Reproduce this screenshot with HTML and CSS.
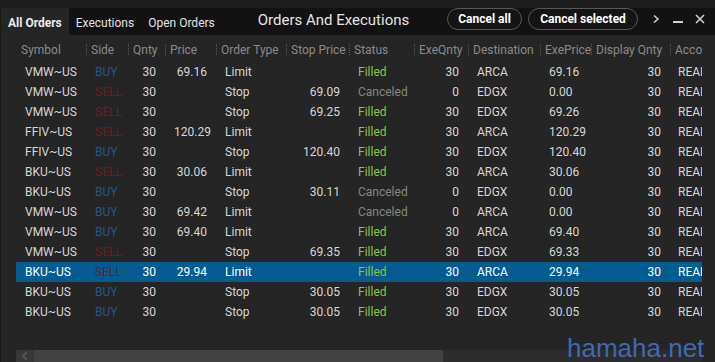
FILE: index.html
```html
<!DOCTYPE html>
<html lang="en">
  <head>
    <meta charset="UTF-8" />
    <title>Orders And Executions</title>
    <link rel="stylesheet" href="styles.css">
  </head>
  <body>
    <div class="window">
      <div class="topstrip"></div>
      <div class="titlebar">
        <div class="tabs">
          <div class="tab active">All Orders</div>
          <div class="tab">Executions</div>
          <div class="tab">Open Orders</div>
        </div>
        <div class="title">Orders And Executions</div>
        <div class="actions">
          <button class="pill pill-all">Cancel all</button>
          <button class="pill pill-sel">Cancel selected</button>
          <div class="winctl">
            <span class="icon">
              <svg width="8" height="10" viewBox="0 0 8 10"><path d="M2 1.5 L6 5 L2 8.5" fill="none" stroke="#d0d0d0" stroke-width="1.6"/></svg>
            </span>
            <span class="icon">
              <svg width="10" height="10" viewBox="0 0 10 10"><rect x="0" y="7" width="10" height="2" fill="#d0d0d0"/></svg>
            </span>
            <span class="icon">
              <svg width="10" height="10" viewBox="0 0 10 10"><path d="M1 1 L9 9 M9 1 L1 9" stroke="#d0d0d0" stroke-width="1.6"/></svg>
            </span>
          </div>
        </div>
      </div>

      <div class="grid-wrap">
        <table class="grid">
          <colgroup>
            <col class="c-symbol" /><col class="c-side" /><col class="c-qnty" /><col class="c-price" />
            <col class="c-type" /><col class="c-stop" /><col class="c-status" /><col class="c-exeq" />
            <col class="c-dest" /><col class="c-exep" /><col class="c-disp" /><col class="c-acct" />
          </colgroup>
          <thead>
            <tr>
              <th class="first">Symbol</th><th>Side</th><th>Qnty</th><th>Price</th>
              <th>Order Type</th><th>Stop Price</th><th>Status</th><th>ExeQnty</th>
              <th>Destination</th><th>ExePrice</th><th>Display Qnty</th><th>Account</th>
            </tr>
          </thead>
          <tbody>
            <tr><td>VMW~US</td><td class="buy">BUY</td><td class="num">30</td><td class="num">69.16</td><td>Limit</td><td class="num"></td><td class="filled">Filled</td><td class="num">30</td><td>ARCA</td><td>69.16</td><td class="num">30</td><td>REAL</td></tr>
            <tr><td>VMW~US</td><td class="sell">SELL</td><td class="num">30</td><td class="num"></td><td>Stop</td><td class="num">69.09</td><td class="canceled">Canceled</td><td class="num">0</td><td>EDGX</td><td>0.00</td><td class="num">30</td><td>REAL</td></tr>
            <tr><td>VMW~US</td><td class="sell">SELL</td><td class="num">30</td><td class="num"></td><td>Stop</td><td class="num">69.25</td><td class="filled">Filled</td><td class="num">30</td><td>EDGX</td><td>69.26</td><td class="num">30</td><td>REAL</td></tr>
            <tr><td>FFIV~US</td><td class="sell">SELL</td><td class="num">30</td><td class="num">120.29</td><td>Limit</td><td class="num"></td><td class="filled">Filled</td><td class="num">30</td><td>ARCA</td><td>120.29</td><td class="num">30</td><td>REAL</td></tr>
            <tr><td>FFIV~US</td><td class="buy">BUY</td><td class="num">30</td><td class="num"></td><td>Stop</td><td class="num">120.40</td><td class="filled">Filled</td><td class="num">30</td><td>EDGX</td><td>120.40</td><td class="num">30</td><td>REAL</td></tr>
            <tr><td>BKU~US</td><td class="sell">SELL</td><td class="num">30</td><td class="num">30.06</td><td>Limit</td><td class="num"></td><td class="filled">Filled</td><td class="num">30</td><td>ARCA</td><td>30.06</td><td class="num">30</td><td>REAL</td></tr>
            <tr><td>BKU~US</td><td class="buy">BUY</td><td class="num">30</td><td class="num"></td><td>Stop</td><td class="num">30.11</td><td class="canceled">Canceled</td><td class="num">0</td><td>EDGX</td><td>0.00</td><td class="num">30</td><td>REAL</td></tr>
            <tr><td>VMW~US</td><td class="buy">BUY</td><td class="num">30</td><td class="num">69.42</td><td>Limit</td><td class="num"></td><td class="canceled">Canceled</td><td class="num">0</td><td>ARCA</td><td>0.00</td><td class="num">30</td><td>REAL</td></tr>
            <tr><td>VMW~US</td><td class="buy">BUY</td><td class="num">30</td><td class="num">69.40</td><td>Limit</td><td class="num"></td><td class="filled">Filled</td><td class="num">30</td><td>ARCA</td><td>69.40</td><td class="num">30</td><td>REAL</td></tr>
            <tr><td>VMW~US</td><td class="sell">SELL</td><td class="num">30</td><td class="num"></td><td>Stop</td><td class="num">69.35</td><td class="filled">Filled</td><td class="num">30</td><td>EDGX</td><td>69.33</td><td class="num">30</td><td>REAL</td></tr>
            <tr class="selected"><td>BKU~US</td><td class="sell">SELL</td><td class="num">30</td><td class="num">29.94</td><td>Limit</td><td class="num"></td><td class="filled">Filled</td><td class="num">30</td><td>ARCA</td><td>29.94</td><td class="num">30</td><td>REAL</td></tr>
            <tr><td>BKU~US</td><td class="buy">BUY</td><td class="num">30</td><td class="num"></td><td>Stop</td><td class="num">30.05</td><td class="filled">Filled</td><td class="num">30</td><td>EDGX</td><td>30.05</td><td class="num">30</td><td>REAL</td></tr>
            <tr><td>BKU~US</td><td class="buy">BUY</td><td class="num">30</td><td class="num"></td><td>Stop</td><td class="num">30.05</td><td class="filled">Filled</td><td class="num">30</td><td>EDGX</td><td>30.05</td><td class="num">30</td><td>REAL</td></tr>
          </tbody>
        </table>
      </div>

      <div class="hscroll">
        <div class="arrow">
          <svg width="8" height="10" viewBox="0 0 8 10"><path d="M6 1 L2 5 L6 9" fill="none" stroke="#555" stroke-width="2"/></svg>
        </div>
        <div class="thumb"></div>
      </div>

      <div class="watermark">hamaha.net</div>
    </div>
  </body>
</html>
```

FILE: styles.css
```css
body {
  margin: 0;
  background-color: #252525;
  font-family: Roboto, "Noto Sans", sans-serif;
  font-size: 12px;
  color: #d6d6d6;
}
.window {
  position: relative;
  width: 715px;
  height: 362px;
  overflow: hidden;
  display: flex;
  flex-direction: column;
  border-left: 1px solid #1a1a1a;
  box-sizing: border-box;
}
.topstrip {
  height: 8px;
  background-color: #1c1c1c;
}
.titlebar {
  height: 27px;
  background-color: #121212;
  display: flex;
  align-items: stretch;
  white-space: nowrap;
}
.tabs {
  display: flex;
  flex-shrink: 0;
}
.tab {
  padding: 0 7px 4px;
  display: flex;
  align-items: flex-end;
  color: #e2e2e2;
  line-height: 16px;
}
.tab.active {
  background-color: #252525;
  font-weight: bold;
  color: #ececec;
}
.title {
  margin: 2px 0 0 36px;
  font-size: 15px;
  color: #e4e4e4;
  line-height: 20px;
  flex-shrink: 0;
}
.actions {
  margin-left: auto;
  padding-right: 4px;
  display: flex;
  align-items: flex-start;
  gap: 6px;
  flex-shrink: 0;
}
.pill {
  height: 22px;
  padding: 0;
  border-radius: 11px;
  border: 1.5px solid #575757;
  background-color: #141414;
  color: #fff;
  font-family: inherit;
  font-size: 12px;
  font-weight: bold;
  line-height: 18px;
  white-space: nowrap;
}
.pill-all {
  width: 75px;
}
.pill-sel {
  width: 110px;
}
.winctl {
  display: flex;
  margin-left: 1px;
}
.icon {
  width: 22px;
  height: 22px;
  display: flex;
  align-items: center;
  justify-content: center;
}
.grid-wrap {
  flex: 1;
  padding-left: 15px;
}
.grid {
  table-layout: fixed;
  width: 686px;
  border-collapse: collapse;
}
.c-symbol { width: 70px; }
.c-side { width: 42px; }
.c-qnty { width: 37px; }
.c-price { width: 51px; }
.c-type { width: 70px; }
.c-stop { width: 63px; }
.c-status { width: 65px; }
.c-exeq { width: 54px; }
.c-dest { width: 72px; }
.c-exep { width: 51px; }
.c-disp { width: 79px; }
.c-acct { width: 32px; }
th {
  height: 25px;
  padding: 2px 0 0 5px;
  text-align: left;
  font-weight: normal;
  color: #8a8a8a;
  white-space: nowrap;
  overflow: hidden;
  background-image: repeating-linear-gradient(to bottom, #5a5a5a 0 1px, transparent 1px 2px);
  background-size: 1px 11px;
  background-position: 0 9px;
  background-repeat: no-repeat;
}
th.first {
  background-image: none;
}
td {
  height: 20px;
  padding: 0 9px;
  white-space: nowrap;
  overflow: hidden;
  text-overflow: clip;
}
td:last-child {
  padding: 0 0 0 8px;
}
td.num {
  text-align: right;
}
.buy {
  color: #1e5a8c;
}
.sell {
  color: #7e1526;
}
.filled {
  color: #8cc43c;
}
.canceled {
  color: #858585;
}
tr.selected {
  background-color: #035c8f;
  color: #fff;
}
.hscroll {
  height: 12px;
  margin-left: 15px;
  width: 686px;
  background-color: #2c2c2c;
  display: flex;
}
.arrow {
  width: 18px;
  background-color: #383838;
  display: flex;
  align-items: center;
  justify-content: center;
}
.thumb {
  width: 409px;
  background-color: #424242;
}
.watermark {
  position: absolute;
  left: 566px;
  top: 333px;
  font-family: "Liberation Sans", sans-serif;
  font-size: 26px;
  color: #3f69b3;
  line-height: 30px;
}
```
